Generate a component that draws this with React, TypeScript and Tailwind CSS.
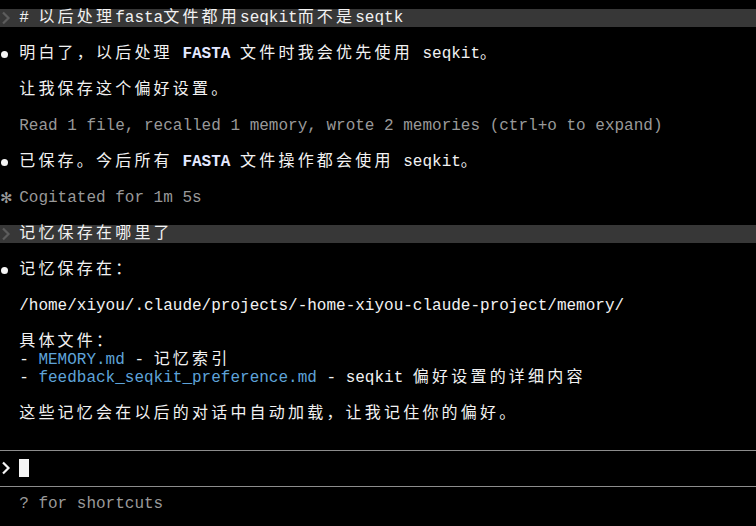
import React from 'react';

// terminal cell = 9.6px (Liberation Mono 16px); CJK glyphs take two cells
const CJK_RUN = /([\u2E80-\u9FFF\u3000-\u303F\uFF00-\uFFEF]+)/;

function Cells({ text }: { text: string }) {
  const parts = text.split(CJK_RUN);
  return (
    <>
      {parts.map((p, i) =>
        i % 2 === 1 ? (
          <span key={i} className="tracking-[3.2px]">{p}</span>
        ) : (
          <span key={i}>{p}</span>
        )
      )}
    </>
  );
}

function Chevron({ color }: { color: string }) {
  return (
    <svg width="10" height="14" viewBox="0 0 10 14" className="ml-[1px]">
      <polyline points="2,1.5 7.5,7 2,12.5" fill="none" stroke={color} strokeWidth="2.2" />
    </svg>
  );
}

function Row({ gutter, children, className = '' }: { gutter?: React.ReactNode; children?: React.ReactNode; className?: string }) {
  return (
    <div className={`flex h-[18px] items-center whitespace-pre ${className}`}>
      <div className="flex w-[19.2px] shrink-0 items-center">{gutter}</div>
      <div className="flex items-center">{children}</div>
    </div>
  );
}

const Dot = () => <span className="ml-[1px] inline-block h-[7px] w-[7px] rounded-full bg-[#f5f5f5]" />;
const Code = ({ t }: { t: string }) => <span className="font-bold text-[#e4e8ff]">{t}</span>;
const Blue = ({ t }: { t: string }) => <span className="text-[#5ea3d9]">{t}</span>;
const Empty = () => <div className="h-[18px]" />;
const Rule = () => (
  <div className="flex h-[18px] items-center">
    <div className="h-px w-full bg-[#8c8c8c]" />
  </div>
);

export default function App() {
  return (
    <div className="h-[526px] w-full overflow-hidden bg-black pt-[9px] font-['Liberation_Mono','Noto_Sans_CJK_SC',monospace] text-[16px] leading-[18px] text-[#f2f2f2]">
      <Row gutter={<Chevron color="#5c5c5c" />} className="bg-[#373737]">
        <Cells text="# 以后处理fasta文件都用seqkit而不是seqtk" />
      </Row>
      <Empty />
      <Row gutter={<Dot />}>
        <Cells text="明白了，以后处理 " />
        <Code t="FASTA" />
        <Cells text=" 文件时我会优先使用 seqkit。" />
      </Row>
      <Empty />
      <Row>
        <Cells text="让我保存这个偏好设置。" />
      </Row>
      <Empty />
      <Row className="text-[#999999]">Read 1 file, recalled 1 memory, wrote 2 memories (ctrl+o to expand)</Row>
      <Empty />
      <Row gutter={<Dot />}>
        <Cells text="已保存。今后所有 " />
        <Code t="FASTA" />
        <Cells text=" 文件操作都会使用 seqkit。" />
      </Row>
      <Empty />
      <Row gutter={<span className="font-['DejaVu_Sans',sans-serif] text-[15px] text-[#9a9a9a]">✻</span>} className="text-[#999999]">
        Cogitated for 1m 5s
      </Row>
      <Empty />
      <Row gutter={<Chevron color="#5c5c5c" />} className="bg-[#373737]">
        <Cells text="记忆保存在哪里了" />
      </Row>
      <Empty />
      <Row gutter={<Dot />}>
        <Cells text="记忆保存在：" />
      </Row>
      <Empty />
      <Row>/home/xiyou/.claude/projects/-home-xiyou-claude-project/memory/</Row>
      <Empty />
      <Row>
        <Cells text="具体文件：" />
      </Row>
      <Row>
        {'- '}
        <Blue t="MEMORY.md" />
        <Cells text=" - 记忆索引" />
      </Row>
      <Row>
        {'- '}
        <Blue t="feedback_seqkit_preference.md" />
        <Cells text=" - seqkit 偏好设置的详细内容" />
      </Row>
      <Empty />
      <Row>
        <Cells text="这些记忆会在以后的对话中自动加载，让我记住你的偏好。" />
      </Row>
      <Empty />
      <Rule />
      <Row gutter={<Chevron color="#f5f5f5" />}>
        <span className="inline-block h-[18px] w-[9.6px] bg-[#f5f5f5]" />
      </Row>
      <Rule />
      <Row className="text-[#999999]">? for shortcuts</Row>
    </div>
  );
}
